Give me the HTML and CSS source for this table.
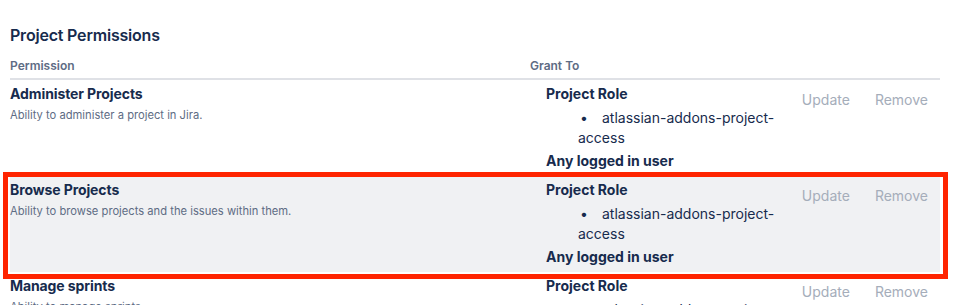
FILE: index.html
```html
<!DOCTYPE html>
<html lang="en">
<head>
<meta charset="utf-8">
<title>Project Permissions</title>
<link rel="stylesheet" href="styles.css">
</head>
<body>
<main class="page">
  <h2 class="title">Project Permissions</h2>
  <div class="table">
    <div class="row head">
      <div class="cell">Permission</div>
      <div class="cell grant-head">Grant To</div>
      <div class="cell"></div>
    </div>

    <div class="row">
      <div class="cell perm">
        <div class="perm-name">Administer Projects</div>
        <div class="perm-desc">Ability to administer a project in Jira.</div>
      </div>
      <div class="cell grant">
        <div class="grant-type">Project Role</div>
        <ul class="grant-list"><li>atlassian-addons-project-access</li></ul>
        <div class="grant-type any">Any logged in user</div>
      </div>
      <div class="cell actions">
        <span class="action">Update</span>
        <span class="action">Remove</span>
      </div>
    </div>

    <div class="row highlighted">
      <div class="cell perm">
        <div class="perm-name">Browse Projects</div>
        <div class="perm-desc">Ability to browse projects and the issues within them.</div>
      </div>
      <div class="cell grant">
        <div class="grant-type">Project Role</div>
        <ul class="grant-list"><li>atlassian-addons-project-access</li></ul>
        <div class="grant-type any">Any logged in user</div>
      </div>
      <div class="cell actions">
        <span class="action">Update</span>
        <span class="action">Remove</span>
      </div>
      <div class="annotation"></div>
    </div>

    <div class="row">
      <div class="cell perm">
        <div class="perm-name">Manage sprints</div>
        <div class="perm-desc">Ability to manage sprints.</div>
      </div>
      <div class="cell grant">
        <div class="grant-type">Project Role</div>
        <ul class="grant-list"><li>atlassian-addons-project-access</li></ul>
        <div class="grant-type any">Any logged in user</div>
      </div>
      <div class="cell actions">
        <span class="action">Update</span>
        <span class="action">Remove</span>
      </div>
    </div>
  </div>
</main>
</body>
</html>
```
FILE: styles.css
```css
* { box-sizing: border-box; }

html, body {
  margin: 0;
  padding: 0;
  background: #ffffff;
  overflow: hidden;
}

body {
  font-family: "Inter", "Noto Sans", sans-serif;
  color: #172b4d;
  font-size: 14px;
  line-height: 20px;
}

.page {
  padding: 24px 32px 0 10px;
}

.title {
  margin: 0;
  font-size: 16px;
  line-height: 22px;
  font-weight: 600;
  color: #172b4d;
  letter-spacing: -0.2px;
}

.table {
  margin-top: 12px;
  width: 930px;
}

.row {
  display: grid;
  grid-template-columns: 520px 260px 150px;
  position: relative;
}

.row.head {
  border-bottom: 2px solid #dfe1e6;
  font-size: 12px;
  line-height: 16px;
  font-weight: 600;
  color: #5e6c84;
  padding-bottom: 4px;
}

.row:not(.head) {
  height: 96px;
  padding-top: 4px;
}

.row.highlighted {
  background: #f0f1f3;
}

.perm-name {
  font-weight: 700;
  font-size: 14px;
  line-height: 20px;
  letter-spacing: -0.1px;
}

.perm-desc {
  margin-top: 3px;
  font-size: 11.2px;
  line-height: 16px;
  color: #5e6c84;
}

.grant {
  padding-left: 16px;
}

.grant-type {
  font-weight: 700;
}

.grant-type.any {
  margin-top: 3px;
}

.grant-list {
  list-style: none;
  margin: 4px 0 0;
  padding: 0 0 0 32px;
}

.grant-list li::before {
  content: "\2022";
  display: inline-block;
  width: 22px;
  padding-left: 2px;
}

.actions {
  display: flex;
  justify-content: flex-end;
  align-items: flex-start;
  gap: 25px;
  padding: 6px 12px 0 0;
}

.action {
  color: #a5adba;
  font-size: 14px;
  line-height: 20px;
}

.annotation {
  position: absolute;
  left: -7px;
  right: -8px;
  top: -4px;
  bottom: -7px;
  border: 5px solid #ff2400;
  pointer-events: none;
}
```
